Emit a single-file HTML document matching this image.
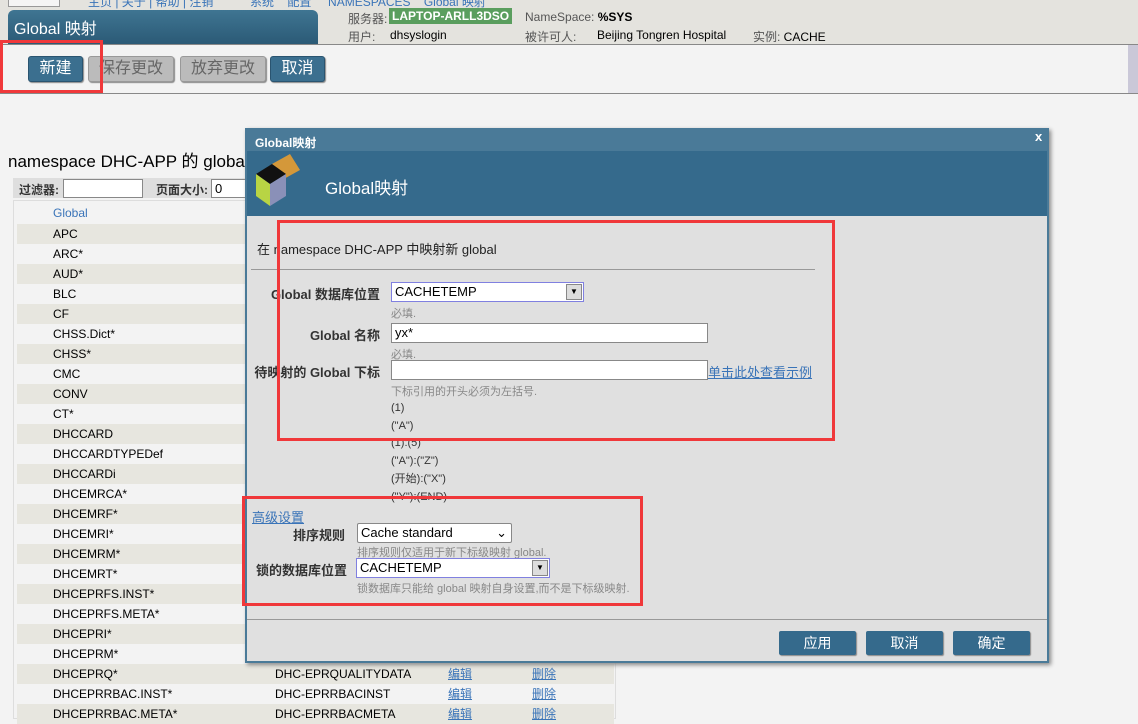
<!DOCTYPE html>
<html><head><meta charset="utf-8">
<style>
*{margin:0;padding:0;box-sizing:border-box}
body{width:1138px;height:719px;overflow:hidden;background:#f3f3f3;font-family:"Liberation Sans","Noto Sans CJK SC",sans-serif;font-size:12px;color:#000;position:relative}
.a{position:absolute;white-space:nowrap}
.btn{position:absolute;top:56px;height:26px;border-radius:3px;font-size:16px;line-height:24px;text-align:center;color:#fff;background:#3b6f8f;border:1px solid #2a5470;box-shadow:1px 1px 1px #888}
.btn.g{background:#bbb;color:#666;border-color:#999}
.row{position:absolute;left:17px;width:597px;height:20px;line-height:20px}
.row span{position:absolute}
.lnk{color:#3a74b8;text-decoration:underline}
.dbtn{position:absolute;top:631px;width:77px;height:24px;background:#356a8c;color:#fff;border-radius:2px;text-align:center;line-height:24px;font-size:14px;box-shadow:1px 1px 1px #888}
.inp{position:absolute;background:#fff;border:1px solid #888;height:20px;line-height:18px;padding-left:3px;font-size:13px;white-space:nowrap}
.hint{position:absolute;color:#888;font-size:11px;white-space:nowrap}
.lab{position:absolute;font-weight:bold;color:#333;font-size:13px;text-align:right;white-space:nowrap}
.red{position:absolute;border:3px solid #f0383a}
</style></head><body>
<div class="a" style="left:0;top:0;width:1138px;height:44px;background:#e4e3de"></div>
<div class="a" style="left:8px;top:0;width:52px;height:7px;background:#f5f5f5;border:1px solid #999;border-top:none"></div>
<div class="a" style="left:88px;top:-7px;color:#3a74b8;font-size:12px">主页 | 关于 | 帮助 | 注销 &nbsp;&nbsp;&nbsp;&nbsp;&nbsp;&nbsp;&nbsp;&nbsp;&nbsp; 系统 &nbsp;&nbsp; 配置 &nbsp;&nbsp;&nbsp; NAMESPACES &nbsp;&nbsp; Global 映射</div>
<div class="a" style="left:8px;top:10px;width:310px;height:34px;background:linear-gradient(#3f7592,#2b5a76);border-radius:6px 6px 0 0"></div>
<div class="a" style="left:14px;top:15px;color:#fff;font-size:16px">Global 映射</div>
<div class="a" style="left:348px;top:10px;color:#555">服务器:</div>
<div class="a" style="left:389px;top:8px;background:#5a9e5e;color:#fff;font-weight:bold;padding:1px 3px;font-size:12px">LAPTOP-ARLL3DSO</div>
<div class="a" style="left:525px;top:10px;color:#555">NameSpace: <b style="color:#000">%SYS</b></div>
<div class="a" style="left:348px;top:28px;color:#555">用户:</div>
<div class="a" style="left:390px;top:28px;color:#000">dhsyslogin</div>
<div class="a" style="left:525px;top:28px;color:#555">被许可人:</div>
<div class="a" style="left:597px;top:28px;color:#000">Beijing Tongren Hospital</div>
<div class="a" style="left:753px;top:28px;color:#555">实例: <span style="color:#000">CACHE</span></div>
<div class="a" style="left:0;top:44px;width:1138px;height:1px;background:#888"></div>
<div class="a" style="left:0;top:93px;width:1138px;height:1px;background:#888"></div>
<div class="a" style="left:1128px;top:45px;width:10px;height:48px;background:#cac8d8"></div>
<div class="btn" style="left:28px;width:55px">新建</div>
<div class="btn g" style="left:88px;width:86px">保存更改</div>
<div class="btn g" style="left:180px;width:86px">放弃更改</div>
<div class="btn" style="left:270px;width:55px">取消</div>
<div class="red" style="left:0;top:40px;width:103px;height:53px"></div>

<div class="a" style="left:8px;top:147px;font-size:17px">namespace DHC-APP 的 global 映射</div>
<div class="a" style="left:13px;top:178px;width:600px;height:20px;background:#dedede"></div>
<div class="a" style="left:19px;top:181px;font-weight:bold;color:#333">过滤器:</div>
<div class="inp" style="left:63px;top:179px;width:80px;height:19px"></div>
<div class="a" style="left:156px;top:181px;font-weight:bold;color:#333">页面大小:</div>
<div class="inp" style="left:211px;top:179px;width:50px;height:19px">0</div>
<div class="a" style="left:13px;top:200px;width:603px;height:519px;background:#f3f3f3;border:1px solid #ddd"></div>
<div class="a" style="left:53px;top:206px;color:#3a74b8">Global</div>
<div id="rows"></div>
<script>
var n=["APC","ARC*","AUD*","BLC","CF","CHSS.Dict*","CHSS*","CMC","CONV","CT*","DHCCARD","DHCCARDTYPEDef","DHCCARDi","DHCEMRCA*","DHCEMRF*","DHCEMRI*","DHCEMRM*","DHCEMRT*","DHCEPRFS.INST*","DHCEPRFS.META*","DHCEPRI*","DHCEPRM*","DHCEPRQ*","DHCEPRRBAC.INST*","DHCEPRRBAC.META*"];
var d={22:"DHC-EPRQUALITYDATA",23:"DHC-EPRRBACINST",24:"DHC-EPRRBACMETA"};
var h="";
for(var i=0;i<n.length;i++){h+='<div class="row" style="top:'+(224+i*20)+'px;background:'+(i%2?'#f3f3f3':'#e7e6df')+'"><span style="left:36px">'+n[i]+'</span>'+(d[i]?'<span style="left:258px">'+d[i]+'</span><span class="lnk" style="left:431px">编辑</span><span class="lnk" style="left:515px">删除</span>':'')+'</div>';}
document.getElementById("rows").innerHTML=h;
</script>

<div class="a" style="left:245px;top:128px;width:804px;height:535px;background:#e0e0e0;border:2px solid #4a7a98;box-shadow:2px 2px 4px #888"></div>
<div class="a" style="left:245px;top:128px;width:804px;height:23px;background:#4a7a98"></div>
<div class="a" style="left:255px;top:134px;color:#fff;font-weight:bold;font-size:12px">Global映射</div>
<div class="a" style="left:1035px;top:129px;color:#fff;font-weight:bold;font-size:13px">x</div>
<div class="a" style="left:247px;top:151px;width:800px;height:65px;background:#356a8c"></div>
<svg class="a" style="left:254px;top:154px" width="48" height="54" viewBox="0 0 48 54">
<polygon points="18,10 36,0 46,16 28,26" fill="#d4983a"/>
<polygon points="2,20 18,10 32,20 16,30" fill="#111"/>
<polygon points="2,20 16,30 16,52 2,42" fill="#b8d444"/>
<polygon points="16,30 32,20 32,42 16,52" fill="#8a90b8"/>
</svg>
<div class="a" style="left:325px;top:174px;color:#fff;font-size:17px">Global映射</div>
<div class="a" style="left:257px;top:239px;font-size:13px;color:#222">在 namespace DHC-APP 中映射新 global</div>
<div class="a" style="left:251px;top:269px;width:564px;height:1px;background:#999"></div>
<div class="lab" style="left:200px;top:284px;width:180px">Global 数据库位置</div>
<div class="inp" style="left:391px;top:282px;width:193px;border-color:#8080e0">CACHETEMP</div>
<div class="a" style="left:566px;top:284px;width:16px;height:16px;background:#ddd;border:1px solid #888;font-size:8px;text-align:center;line-height:14px">▼</div>
<div class="hint" style="left:391px;top:305px">必填.</div>
<div class="lab" style="left:200px;top:325px;width:180px">Global 名称</div>
<div class="inp" style="left:391px;top:323px;width:317px">yx*</div>
<div class="hint" style="left:391px;top:346px">必填.</div>
<div class="lab" style="left:200px;top:362px;width:180px">待映射的 Global 下标</div>
<div class="inp" style="left:391px;top:360px;width:317px"></div>
<div class="a lnk" style="left:708px;top:362px;font-size:13px">单击此处查看示例</div>
<div class="hint" style="left:391px;top:383px">下标引用的开头必须为左括号.</div>
<div class="a" style="left:391px;top:400px;font-size:11px;color:#333;line-height:17.7px">(1)<br>("A")<br>(1):(5)<br>("A"):("Z")<br>(开始):("X")<br>("Y"):(END)</div>
<div class="a lnk" style="left:252px;top:507px;font-size:13px">高级设置</div>
<div class="lab" style="left:255px;top:525px;width:90px">排序规则</div>
<div class="inp" style="left:357px;top:523px;width:155px;border-radius:2px">Cache standard<span style="position:absolute;right:4px;top:0">⌄</span></div>
<div class="hint" style="left:357px;top:544px">排序规则仅适用于新下标级映射 global.</div>
<div class="lab" style="left:235px;top:560px;width:112px">锁的数据库位置</div>
<div class="inp" style="left:356px;top:558px;width:194px;border-color:#8080e0">CACHETEMP</div>
<div class="a" style="left:532px;top:560px;width:16px;height:16px;background:#ddd;border:1px solid #888;font-size:8px;text-align:center;line-height:14px">▼</div>
<div class="hint" style="left:357px;top:580px">锁数据库只能给 global 映射自身设置,而不是下标级映射.</div>
<div class="a" style="left:247px;top:619px;width:800px;height:1px;background:#999"></div>
<div class="dbtn" style="left:779px">应用</div>
<div class="dbtn" style="left:866px">取消</div>
<div class="dbtn" style="left:953px">确定</div>
<div class="red" style="left:277px;top:220px;width:558px;height:221px"></div>
<div class="red" style="left:242px;top:496px;width:401px;height:110px"></div>
</body></html>
